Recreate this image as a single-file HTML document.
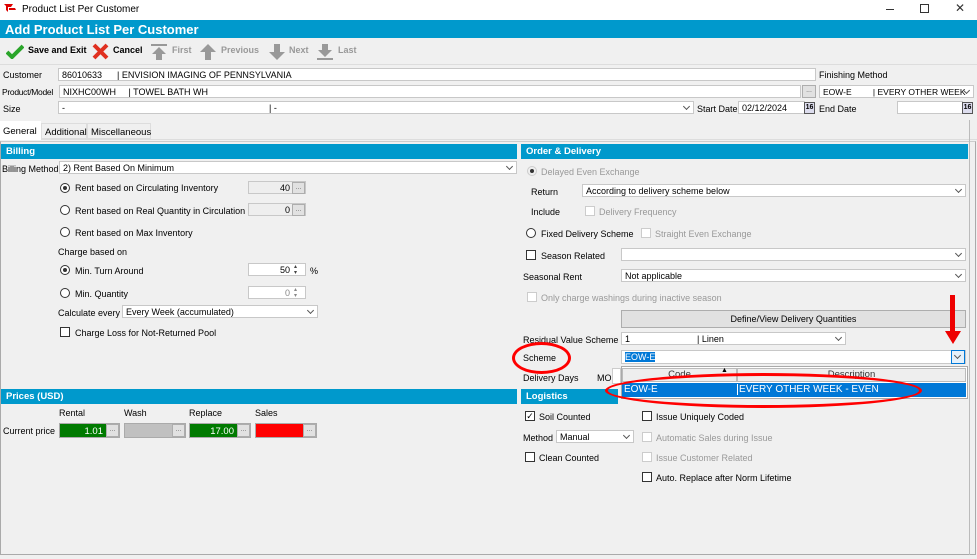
<!DOCTYPE html>
<html><head><meta charset="utf-8"><style>
*{box-sizing:border-box;margin:0;padding:0}
body{width:977px;height:559px;overflow:hidden;background:#f0f0f0;font-family:"Liberation Sans",sans-serif;font-size:9px;color:#000;position:relative}
.a{position:absolute;white-space:nowrap}
.in{position:absolute;background:#fff;border:1px solid #c8c8c8;height:13px;padding:1px 3px;font-size:9px;line-height:10px;white-space:nowrap;overflow:hidden}
.hd{position:absolute;background:#0099cc;color:#fff;font-weight:bold;font-size:9.5px;padding:2px 5px;height:15px}
.dd::after{content:"";position:absolute;right:4px;top:2px;width:4px;height:4px;border-right:1px solid #555;border-bottom:1px solid #555;transform:rotate(45deg)}
.rb{position:absolute;width:10px;height:10px;border:1px solid #333;border-radius:50%;background:#fff}
.rb.on::after{content:"";position:absolute;left:2px;top:2px;width:4px;height:4px;border-radius:50%;background:#333}
.cb{position:absolute;width:10px;height:10px;border:1px solid #333;background:#fff}
.dis{color:#999}.cb.dis,.rb.dis{border-color:#ccc}
.btn{position:absolute;background:#e1e1e1;border:1px solid #adadad;font-size:7px;color:#666;text-align:center;line-height:9px}
.tb{position:absolute;top:45px;font-weight:bold;font-size:9px}
</style></head><body>
<div class="a" style="left:0;top:0;width:977px;height:20px;background:#fff"></div>
<svg class="a" style="left:4px;top:4px" width="14" height="10"><path d="M0 0h9l-2 3h-3v5l-2-2V2z M5 4h6l1 2h-7z" fill="#d00"/></svg>
<div class="a" style="left:22px;top:4px;font-size:10px">Product List Per Customer</div>
<div class="a" style="left:886px;top:9px;width:8px;height:1px;background:#333"></div>
<div class="a" style="left:920px;top:4px;width:9px;height:9px;border:1px solid #333"></div>
<div class="a" style="left:955px;top:1px;font-size:12px;color:#333">✕</div>
<div class="a" style="left:0;top:20px;width:977px;height:18px;background:#0099cc;color:#fff;font-weight:bold;font-size:13px;padding:2px 5px">Add Product List Per Customer</div>
<div class="a" style="left:0;top:38px;width:977px;height:27px;background:#f0f0f0;border-bottom:1px solid #ddd"></div>
<svg class="a" style="left:6px;top:44px" width="18" height="15"><path d="M1 8l5 5L17 2" stroke="#2aa52a" stroke-width="4" fill="none"/></svg>
<div class="tb" style="left:28px">Save and Exit</div>
<svg class="a" style="left:92px;top:43px" width="17" height="17"><path d="M2 2L15 15M15 2L2 15" stroke="#e03020" stroke-width="4"/></svg>
<div class="tb" style="left:113px">Cancel</div>
<svg class="a" style="left:150px;top:43px" width="18" height="18"><rect x="1" y="1" width="16" height="2" fill="#999"/><path d="M9 4l7 7h-4v6H6v-6H2z" fill="#999"/></svg>
<div class="tb" style="left:172px;color:#999">First</div>
<svg class="a" style="left:199px;top:43px" width="18" height="18"><path d="M9 1l8 8h-5v8H6V9H1z" fill="#999"/></svg>
<div class="tb" style="left:221px;color:#999">Previous</div>
<svg class="a" style="left:268px;top:43px" width="18" height="18"><path d="M9 17l8-8h-5V1H6v8H1z" fill="#999"/></svg>
<div class="tb" style="left:289px;color:#999">Next</div>
<svg class="a" style="left:316px;top:43px" width="18" height="18"><path d="M9 14l7-7h-4V1H6v6H2z" fill="#999"/><rect x="1" y="15" width="16" height="2" fill="#999"/></svg>
<div class="tb" style="left:338px;color:#999">Last</div>
<div class="a" style="left:3px;top:70px">Customer</div>
<div class="in" style="left:58px;top:68px;width:758px">86010633&nbsp;&nbsp;&nbsp;&nbsp;&nbsp; | ENVISION IMAGING OF PENNSYLVANIA</div>
<div class="a" style="left:819px;top:70px">Finishing Method</div>
<div class="a" style="left:2px;top:87px;font-size:8.5px;letter-spacing:-0.3px">Product/Model</div>
<div class="in" style="left:59px;top:85px;width:742px">NIXHC00WH&nbsp;&nbsp;&nbsp;&nbsp; | TOWEL BATH WH</div>
<div class="btn" style="left:802px;top:85px;width:14px;height:13px">...</div>
<div class="in dd" style="left:819px;top:85px;width:155px;font-size:8.5px;padding-right:14px">EOW-E&nbsp;&nbsp;&nbsp;&nbsp;&nbsp;&nbsp;&nbsp;&nbsp; | EVERY OTHER WEEK</div>
<div class="a" style="left:3px;top:104px">Size</div>
<div class="in dd" style="left:58px;top:101px;width:636px">-<span style="position:absolute;left:210px">| -</span></div>
<div class="a" style="left:697px;top:104px">Start Date</div>
<div class="in" style="left:738px;top:101px;width:67px">02/12/2024</div>
<div class="a" style="left:804px;top:102px;width:11px;height:12px;border:1px solid #555;background:#dde;font-size:7px;font-weight:bold;text-align:center;line-height:10px">16</div>
<div class="a" style="left:819px;top:104px">End Date</div>
<div class="in" style="left:897px;top:101px;width:66px"></div>
<div class="a" style="left:962px;top:102px;width:11px;height:12px;border:1px solid #555;background:#dde;font-size:7px;font-weight:bold;text-align:center;line-height:10px">16</div>
<div class="a" style="left:0;top:139px;width:977px;height:1px;background:#ddd"></div>
<div class="a" style="left:0;top:121px;width:41px;height:19px;background:#fff;padding:5px 3px;font-size:9.5px">General</div>
<div class="a" style="left:41px;top:123px;width:46px;height:16px;border:1px solid #ddd;padding:3px 3px;font-size:9.5px">Additional</div>
<div class="a" style="left:87px;top:123px;width:64px;height:16px;border:1px solid #ddd;padding:3px 3px;font-size:9.5px">Miscellaneous</div>
<div class="a" style="left:0;top:141px;width:976px;height:414px;border:1px solid #aaa;border-top:1px solid #ccc"></div>
<div class="a" style="left:969px;top:120px;width:1px;height:435px;background:#bbb"></div>
<div class="hd" style="left:1px;top:144px;width:516px">Billing</div>
<div class="a" style="left:2px;top:164px">Billing Method</div>
<div class="in dd" style="left:59px;top:161px;width:458px">2) Rent Based On Minimum</div>
<div class="rb on" style="left:60px;top:183px"></div><div class="a" style="left:75px;top:183px">Rent based on Circulating Inventory</div>
<div class="in" style="left:248px;top:181px;width:58px;background:#eee;text-align:right;padding-right:15px">40</div><div class="btn" style="left:292px;top:182px;width:13px;height:12px">...</div>
<div class="rb" style="left:60px;top:205px"></div><div class="a" style="left:75px;top:206px">Rent based on Real Quantity in Circulation</div>
<div class="in" style="left:248px;top:203px;width:58px;background:#eee;text-align:right;padding-right:15px">0</div><div class="btn" style="left:292px;top:204px;width:13px;height:12px">...</div>
<div class="rb" style="left:60px;top:227px"></div><div class="a" style="left:75px;top:228px">Rent based on Max Inventory</div>
<div class="a" style="left:58px;top:247px">Charge based on</div>
<div class="rb on" style="left:60px;top:265px"></div><div class="a" style="left:75px;top:266px">Min. Turn Around</div>
<div class="in" style="left:248px;top:263px;width:58px;text-align:right;padding-right:15px">50</div><div class="a" style="left:294px;top:264px;font-size:6px;line-height:6px;color:#444">▴<br>▾</div><div class="a" style="left:310px;top:266px">%</div>
<div class="rb" style="left:60px;top:288px"></div><div class="a" style="left:75px;top:289px">Min. Quantity</div>
<div class="in" style="left:248px;top:286px;width:58px;text-align:right;padding-right:15px;color:#888">0</div><div class="a" style="left:294px;top:287px;font-size:6px;line-height:6px;color:#888">▴<br>▾</div>
<div class="a" style="left:58px;top:308px">Calculate every</div>
<div class="in dd" style="left:122px;top:305px;width:196px">Every Week (accumulated)</div>
<div class="cb" style="left:60px;top:327px"></div><div class="a" style="left:75px;top:328px">Charge Loss for Not-Returned Pool</div>
<div class="hd" style="left:1px;top:389px;width:516px">Prices (USD)</div>
<div class="a" style="left:59px;top:408px">Rental</div><div class="a" style="left:124px;top:408px">Wash</div><div class="a" style="left:189px;top:408px">Replace</div><div class="a" style="left:255px;top:408px">Sales</div>
<div class="a" style="left:3px;top:426px">Current price</div>
<div class="a" style="left:59px;top:423px;width:61px;height:15px;border:1px solid #aaa;background:#007a00;color:#fff;text-align:right;padding:2px 16px 0 0;font-size:9.5px">1.01</div><div class="btn" style="left:106px;top:424px;width:13px;height:13px">...</div>
<div class="a" style="left:124px;top:423px;width:62px;height:15px;border:1px solid #aaa;background:#c0c0c0"></div><div class="btn" style="left:172px;top:424px;width:13px;height:13px">...</div>
<div class="a" style="left:189px;top:423px;width:62px;height:15px;border:1px solid #aaa;background:#007a00;color:#fff;text-align:right;padding:2px 16px 0 0;font-size:9.5px">17.00</div><div class="btn" style="left:237px;top:424px;width:13px;height:13px">...</div>
<div class="a" style="left:255px;top:423px;width:62px;height:15px;border:1px solid #aaa;background:#f00"></div><div class="btn" style="left:303px;top:424px;width:13px;height:13px">...</div>
<div class="hd" style="left:521px;top:144px;width:447px">Order &amp; Delivery</div>
<div class="rb on dis" style="left:527px;top:166px;background:#eee"></div><div class="a dis" style="left:541px;top:167px">Delayed Even Exchange</div>
<div class="a" style="left:531px;top:187px">Return</div>
<div class="in dd" style="left:582px;top:184px;width:384px">According to delivery scheme below</div>
<div class="a" style="left:531px;top:207px">Include</div>
<div class="cb dis" style="left:585px;top:206px"></div><div class="a dis" style="left:599px;top:207px">Delivery Frequency</div>
<div class="rb" style="left:526px;top:228px"></div><div class="a" style="left:541px;top:229px">Fixed Delivery Scheme</div>
<div class="cb dis" style="left:641px;top:228px"></div><div class="a dis" style="left:655px;top:229px">Straight Even Exchange</div>
<div class="cb" style="left:526px;top:250px"></div><div class="a" style="left:541px;top:251px">Season Related</div>
<div class="in dd" style="left:621px;top:248px;width:345px"></div>
<div class="a" style="left:523px;top:272px">Seasonal Rent</div>
<div class="in dd" style="left:621px;top:269px;width:345px">Not applicable</div>
<div class="cb dis" style="left:527px;top:292px"></div><div class="a dis" style="left:541px;top:293px">Only charge washings during inactive season</div>
<div class="btn" style="left:621px;top:310px;width:345px;height:18px;font-size:9px;color:#000;line-height:16px">Define/View Delivery Quantities</div>
<div class="a" style="left:523px;top:335px">Residual Value Scheme</div>
<div class="in dd" style="left:621px;top:332px;width:225px">1<span style="position:absolute;left:75px">| Linen</span></div>
<div class="a" style="left:523px;top:353px">Scheme</div>
<div class="in" style="left:621px;top:350px;width:345px;height:14px"><span style="background:#0078d7;color:#fff">EOW-E</span></div>
<div class="a dd" style="left:951px;top:350px;width:14px;height:14px;border:1px solid #0078d7;background:#e5f1fb"></div>
<div class="a" style="left:523px;top:373px">Delivery Days</div>
<div class="a" style="left:612px;top:368px;width:9px;height:16px;background:#fff;border:1px solid #ccc"></div>
<div class="a" style="left:597px;top:373px">MO</div>
<div class="a" style="left:621px;top:366px;width:347px;height:33px;background:#fff;border:1px solid #aaa"></div>
<div class="a" style="left:622px;top:368px;width:115px;height:14px;background:#eee;border:1px solid #bbb;text-align:center;font-size:9.5px;color:#333;line-height:12px">Code</div>
<div class="a" style="left:737px;top:368px;width:229px;height:14px;background:#eee;border:1px solid #bbb;text-align:center;font-size:9.5px;color:#333;line-height:12px">Description</div>
<div class="a" style="left:721px;top:367px;font-size:7px">▲</div>
<div class="a" style="left:622px;top:383px;width:344px;height:14px;background:#0078d7;color:#fff;font-size:10px;padding:1px 2px">EOW-E<span style="position:absolute;left:115px;top:1px;border-left:1px solid #fff;padding-left:1px">EVERY OTHER WEEK - EVEN</span></div>
<div class="hd" style="left:521px;top:389px;width:97px">Logistics</div>
<div class="cb" style="left:525px;top:411px;font-size:9px;line-height:8px;text-align:center">✓</div><div class="a" style="left:539px;top:412px">Soil Counted</div>
<div class="a" style="left:523px;top:433px">Method</div>
<div class="in dd" style="left:556px;top:430px;width:78px">Manual</div>
<div class="cb" style="left:525px;top:452px"></div><div class="a" style="left:539px;top:453px">Clean Counted</div>
<div class="cb" style="left:642px;top:411px"></div><div class="a" style="left:656px;top:412px">Issue Uniquely Coded</div>
<div class="cb dis" style="left:642px;top:432px"></div><div class="a dis" style="left:656px;top:433px">Automatic Sales during Issue</div>
<div class="cb dis" style="left:642px;top:452px"></div><div class="a dis" style="left:656px;top:453px">Issue Customer Related</div>
<div class="cb" style="left:642px;top:472px"></div><div class="a" style="left:656px;top:473px">Auto. Replace after Norm Lifetime</div>
<div class="a" style="left:512px;top:342px;width:59px;height:32px;border:3px solid #f00;border-radius:50%"></div>
<div class="a" style="left:605px;top:373px;width:317px;height:35px;border:3px solid #f00;border-radius:50%"></div>
<div class="a" style="left:950px;top:295px;width:5px;height:38px;background:#e00"></div>
<div class="a" style="left:945px;top:331px;width:0;height:0;border-left:8px solid transparent;border-right:8px solid transparent;border-top:13px solid #e00"></div>
</body></html>
